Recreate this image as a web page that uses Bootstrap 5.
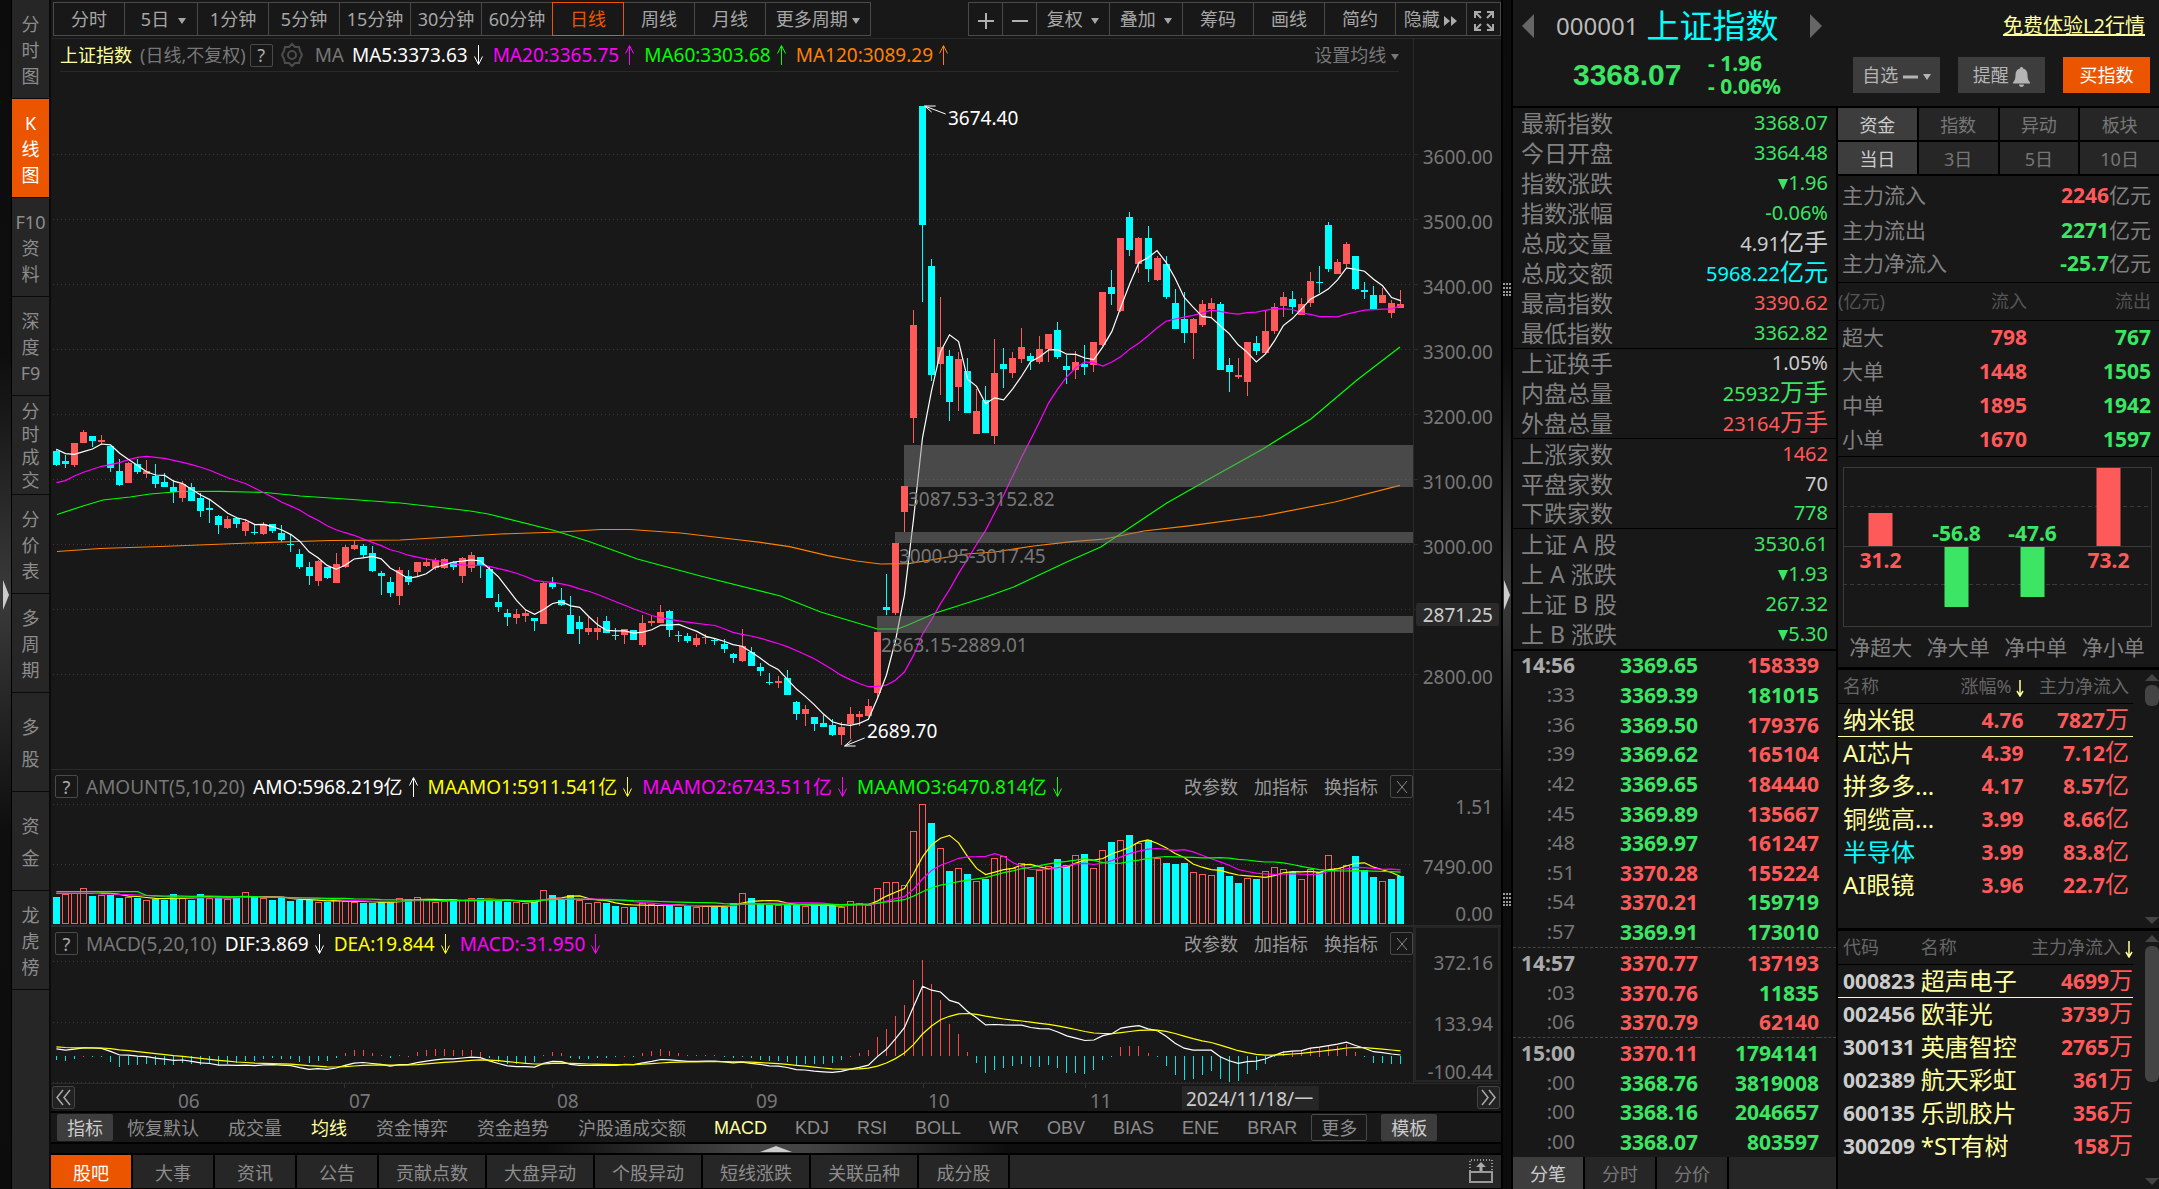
<!DOCTYPE html>
<html lang="zh-CN">
<head>
<meta charset="utf-8">
<meta name="viewport" content="width=device-width, initial-scale=1">
<title>上证指数 000001</title>
<link rel="stylesheet" href="https://cdn.jsdelivr.net/npm/bootstrap@5.3.0/dist/css/bootstrap.min.css">
<script src="https://cdn.jsdelivr.net/npm/bootstrap@5.3.0/dist/js/bootstrap.bundle.min.js"></script>
<style>
:root{--bg:#181818;--panel:#262626;--on:#3d3d3d;--dim:#777;--txt:#999;--up:#ff5a5a;--down:#3ce664;--cy:#0ff;--yel:#ffff9e;--org:#ec5500}
body{background:var(--bg);color:var(--txt);font-family:"Noto Sans","Noto Sans CJK SC",sans-serif;font-size:18px;line-height:24px;min-height:100vh;overflow:hidden}
button,input{font-family:inherit}
.btn{--bs-btn-padding-x:0;--bs-btn-padding-y:0;--bs-btn-border-radius:0;--bs-btn-font-size:18px;--bs-btn-line-height:24px;--bs-btn-color:var(--txt);--bs-btn-hover-color:#ddd;white-space:nowrap}
.up{color:var(--up)!important}.down{color:var(--down)!important}.cy{color:var(--cy)!important}.yel{color:var(--yel)!important}.pale{color:#ccc!important}.dimmed{color:var(--dim)}
.gutter{width:12px;background:linear-gradient(#0c0c0c 0,#0e0e0e 30%,#3a3a3a 50%,#0e0e0e 70%,#0c0c0c 100%);border-right:1px solid #000;flex:none}
.gutter.mid{border-left:2px solid #000;border-right:2px solid #000}
.side{width:39px;background:var(--panel);border-right:2px solid #0a0a0a;flex:none}
.side .btn{height:99px;border:0;border-bottom:1px solid #0a0a0a;color:#8c8c8c;padding-top:2px;--bs-btn-line-height:26px}
.side .btn.tight{--bs-btn-line-height:23px}
.side .btn.loose{--bs-btn-line-height:32px}
.side .btn.on{background:var(--org);color:#fff}
.tools{padding:2px 1px 2px 2px;border-bottom:1px solid #262626;height:39px}
.tools .btn{width:72px;height:34px;border:1px solid #4a4a4a;margin-right:-1px;color:#a6a6a6}
.tools .btn.w74{width:74px}.tools .btn.w106{width:106px}.tools .btn.w35{width:35px}
.tools .btn.on{border-color:var(--org);color:var(--org);z-index:1}
.caret{display:inline-block;border:4px solid transparent;border-top:6px solid currentColor;border-bottom:0;vertical-align:middle}
.plotcol{min-width:0;border-right:1px solid #2a2a2a}
.axis{width:87px;flex:none}
.legend{height:33px;flex:none}
.legend.main{border-bottom:1px solid #2a2a2a;margin:0 14px 0 9px}
.legend .val{font-size:19px;margin-right:10px;display:inline-flex;align-items:center;white-space:nowrap}
.legend .val svg{margin-left:5px;width:10px;height:22px}
.legend .nm{font-size:19px;color:var(--dim);margin-right:8px}
.qbtn{width:23px;height:23px;border:1px solid #4a4a4a!important;border-radius:2px!important;line-height:20px!important;color:#aaa!important}
.xmark{width:12px!important;height:14px!important;margin:3px auto}
.panel svg,.axis svg{display:block;width:100%;height:100%;overflow:visible}
.plot{flex:1 1 0;min-height:0}
.price-panel{flex:1;min-height:0}
.amount-panel{height:156px;border-top:1px solid #2a2a2a}
.macd-panel{height:159px;border-top:2px solid #2a2a2a;border-bottom:1px solid #2a2a2a}
.dates{height:27px}
.dates svg{display:block;width:100%;height:27px;overflow:visible}
.inds{height:33px;border-top:2px solid #000;border-bottom:2px solid #000;padding-left:6px}
.inds .g29{gap:29px}.inds .g28{gap:28px}.inds .g14{gap:14px}
.inds .btn{border:0;color:#8c8c8c}
.inds .latin .btn{font-family:"Liberation Sans",sans-serif}
.inds .btn.pill{background:var(--on);color:#ccc;width:56px;height:27px;border-radius:2px}
.inds .btn.more{border:1px solid #4a4a4a;width:56px;height:27px;border-radius:2px}
.hsplit{height:11px;background:linear-gradient(90deg,#0e0e0e 34%,#444 48%,#444 52%,#0e0e0e 66%);border-bottom:2px solid #000}
.foot{height:34px;background:var(--panel);border-bottom:1px solid #000}
.foot .btn{border:0;border-right:2px solid #000;width:82px;color:#8c8c8c;padding-top:2px}
.foot .btn.wide{width:108px}.foot .btn.w91{width:91px}
.foot .btn.on{background:var(--org);color:#fff}
.quote{width:646px;flex:none}
.quote-head{height:108px;border-bottom:2px solid #000}
.qrow1{height:52px;padding:0 14px 0 9px}
.qrow2{height:44px;padding:2px 9px 0 60px}
.code{font-size:24px;color:#bbb}
.title-big{font-size:33px;line-height:40px;color:var(--cy)}
.last{font:bold 30px/36px "Liberation Sans",sans-serif;width:135px}
.chg{font:bold 21px/23px "Noto Sans",sans-serif}
.act{width:87px;height:36px;background:var(--on)!important;border:0;color:#b4b4b4}
.act.buy{background:var(--org)!important;color:#fff}
.leftcol{width:325px;border-right:2px solid #000;flex:none}
.info td,.info th{height:30px;padding:0 8px;line-height:28px;font-weight:400}
.info th{font-size:23px;color:#808080}
.info td{font-size:20px;text-align:right}
.info i{font-style:normal;font-size:24px}
.info tbody+tbody{border-top:1px solid #000}
.ticks{border-top:2px solid #000;flex:1}
.ticks table{height:100%}
.ticks td{padding:0;text-align:right;font-size:21px;font-weight:700;line-height:24px}
.ticks td.s{font-size:20px;font-weight:400;color:#777}
.ticks td.h{color:#aaa}
.ticks tr.dash{border-bottom:1px dashed #444}
.tabs .btn{flex:1;background:var(--panel);border:0;height:32px;color:#777;padding-top:2px}
.tabs .btn.on{background:var(--on);color:#ccc}
.tabs{gap:2px;border-bottom:2px solid #000}
.lower{background:var(--panel);border-bottom:0;gap:0}
.lower .btn{width:72px;flex:none;border-right:2px solid #000}
.flow td,.flow th{padding:0 8px 0 4px;font-size:21px;line-height:24px;font-weight:400;color:#808080}
.flow td{text-align:right}
.flow .r34 tr{height:34px}
.flow .cap th{font-size:18px;color:#555;height:38px;border-top:1px solid #000;border-bottom:1px solid #000}
.netchart{border-top:1px solid #000;padding:10px 7px 0 4px;height:211px}
.netchart svg{display:block;width:100%;height:160px}
.netchart .names{font-size:21px;line-height:40px;color:#808080}
.list{border-top:3px solid #000}
.list table{width:295px}
.list th{font-size:18px;font-weight:400;color:#666;height:33px;border-bottom:1px solid #000;padding:0;white-space:nowrap}
.list td{height:33px;padding:0;font-size:21px;font-weight:700;color:var(--up);line-height:30px;white-space:nowrap}
.list td.name,.list td i{font-size:24px;font-weight:400;font-style:normal}
.list td.name{color:var(--yel)}
.list tr.sel td{border-bottom:1px solid var(--yel)}
.list td:first-child,.list th:first-child{padding-left:5px}
.list .e{text-align:right;padding-right:4px}
.sort{width:8px;height:18px;margin-left:4px}
.sbar{width:14px}
.sbar .thumb{background:#444;border-radius:6px;width:14px}
.tri{border:7px solid transparent;width:0}
.tri.u{border-top:0;border-bottom:7px solid #444}
.tri.d{border-bottom:0;border-top:7px solid #444}
</style>
</head>
<body class="d-flex vh-100">
<svg width="0" height="0" class="position-absolute" aria-hidden="true">
  <symbol id="dn" viewBox="0 0 10 22"><path d="M5.5 1v19M1.5 12.5l4 8 4-8" fill="none" stroke="currentColor"/></symbol>
  <symbol id="upa" viewBox="0 0 10 22"><path d="M5.5 21V2M1.500 9.500l4-8 4 8" fill="none" stroke="currentColor"/></symbol>
  <symbol id="srt" viewBox="0 0 8 18"><path d="M4 1v15M1 12l3 5 3-5" fill="none" stroke="currentColor" stroke-width="1.500"/></symbol>
  <symbol id="cross" viewBox="0 0 12 14"><path d="M1 1l10 12M11 1L1 13" stroke="#888"/></symbol>
  <symbol id="grip" viewBox="0 0 8 13"><path d="M0 1h8M0 5h8M0 9h8M0 12h8" stroke="#999" stroke-width="2" stroke-dasharray="2 1"/></symbol>
  <symbol id="fall" viewBox="0 0 10 11"><path d="M0 0h10L5 11z" fill="#3ce664"/></symbol>
</svg>

<div class="gutter d-flex align-items-center"><svg width="10" height="32" viewBox="0 0 10 32"><path d="M3 1l6 15-6 15z" fill="#ccc"/></svg></div>

<nav class="side d-flex flex-column">
  <button class="btn">分<br>时<br>图</button>
  <button class="btn on">K<br>线<br>图</button>
  <button class="btn">F10<br>资<br>料</button>
  <button class="btn">深<br>度<br>F9</button>
  <button class="btn tight">分<br>时<br>成<br>交</button>
  <button class="btn">分<br>价<br>表</button>
  <button class="btn">多<br>周<br>期</button>
  <button class="btn loose">多<br>股</button>
  <button class="btn loose">资<br>金</button>
  <button class="btn">龙<br>虎<br>榜</button>
</nav>

<main class="d-flex flex-column flex-grow-1" style="min-width:0">
  <div class="tools d-flex">
    <button class="btn">分时</button><button class="btn w74">&nbsp;5日 <span class="caret ms-1"></span></button><button class="btn">1分钟</button><button class="btn">5分钟</button><button class="btn">15分钟</button><button class="btn">30分钟</button><button class="btn">60分钟</button><button class="btn on">日线</button><button class="btn">周线</button><button class="btn">月线</button><button class="btn w106">更多周期 <span class="caret"></span></button>
    <div class="d-flex ms-auto">
      <button class="btn w35" aria-label="放大"><svg width="18" height="18" viewBox="0 0 18 18"><path d="M9 1v16M1 9h16" stroke="#b0b0b0" stroke-width="2"/></svg></button>
      <button class="btn w35" aria-label="缩小"><svg width="18" height="18" viewBox="0 0 18 18"><path d="M1 9h16" stroke="#b0b0b0" stroke-width="2"/></svg></button>
      <button class="btn w74">复权 <span class="caret ms-1"></span></button><button class="btn w74">叠加 <span class="caret ms-1"></span></button><button class="btn">筹码</button><button class="btn">画线</button><button class="btn">简约</button>
      <button class="btn">隐藏 <svg width="14" height="12" viewBox="0 0 14 12"><path d="M0 1l6 5-6 5zM7 1l6 5-6 5z" fill="#aaa"/></svg></button>
      <button class="btn w35" aria-label="全屏"><svg width="22" height="22" viewBox="0 0 22 22"><path d="M2 8V2h6M14 2h6v6M20 14v6h-6M8 20H2v-6M2 2l6 6M20 2l-6 6M20 20l-6-6M2 20l6-6" fill="none" stroke="#aaa" stroke-width="2"/></svg></button>
    </div>
  </div>

  <section class="panel price-panel d-flex">
    <div class="plotcol flex-grow-1 d-flex flex-column">
      <div class="legend main d-flex align-items-center">
        <span class="yel me-2">上证指数</span><span class="dimmed">(日线,不复权)</span>
        <button class="btn qbtn ms-1">?</button>
        <svg style="width:22px;height:24px" class="mx-2" viewBox="0 0 22 24"><path d="M11 1l3 3 4 0 1 4 2 4-2 4-1 4-4 0-3 3-3-3-4 0-1-4-2-4 2-4 1-4 4 0z" fill="none" stroke="#4c4c4c" stroke-width="2"/><circle cx="11" cy="12" r="4" fill="none" stroke="#4c4c4c" stroke-width="2"/></svg>
        <span class="nm ms-1">MA</span>
        <span class="val text-white">MA5:3373.63<svg><use href="#dn"/></svg></span>
        <span class="val" style="color:#f0f">MA20:3365.75<svg><use href="#upa"/></svg></span>
        <span class="val" style="color:#0f0">MA60:3303.68<svg><use href="#upa"/></svg></span>
        <span class="val" style="color:#ff8000">MA120:3089.29<svg><use href="#upa"/></svg></span>
        <button class="btn ms-auto border-0 dimmed">设置均线 <span class="caret"></span></button>
      </div>
      <div class="plot"><svg id="kline"></svg></div>
    </div>
    <div class="axis"><svg id="kaxis"></svg></div>
  </section>

  <section class="panel amount-panel d-flex">
    <div class="plotcol flex-grow-1 d-flex flex-column">
      <div class="legend d-flex align-items-center ps-1">
        <button class="btn qbtn me-2">?</button><span class="nm">AMOUNT(5,10,20)</span>
        <span class="val text-white">AMO:5968.219亿<svg><use href="#upa"/></svg></span>
        <span class="val" style="color:#ff0">MAAMO1:5911.541亿<svg><use href="#dn"/></svg></span>
        <span class="val" style="color:#f0f">MAAMO2:6743.511亿<svg><use href="#dn"/></svg></span>
        <span class="val" style="color:#0f0">MAAMO3:6470.814亿<svg><use href="#dn"/></svg></span>
        <span class="ms-auto d-flex gap-3"><button class="btn border-0">改参数</button><button class="btn border-0">加指标</button><button class="btn border-0 me-1">换指标</button></span>
        <button class="btn qbtn ms-2" aria-label="关闭"><svg class="xmark"><use href="#cross"/></svg></button>
      </div>
      <div class="plot"><svg id="amo"></svg></div>
    </div>
    <div class="axis"><svg id="aaxis"></svg></div>
  </section>

  <section class="panel macd-panel d-flex">
    <div class="plotcol flex-grow-1 d-flex flex-column">
      <div class="legend d-flex align-items-center ps-1">
        <button class="btn qbtn me-2">?</button><span class="nm">MACD(5,20,10)</span>
        <span class="val text-white">DIF:3.869<svg><use href="#dn"/></svg></span>
        <span class="val" style="color:#ff0">DEA:19.844<svg><use href="#dn"/></svg></span>
        <span class="val" style="color:#f0f">MACD:-31.950<svg><use href="#dn"/></svg></span>
        <span class="ms-auto d-flex gap-3"><button class="btn border-0">改参数</button><button class="btn border-0">加指标</button><button class="btn border-0 me-1">换指标</button></span>
        <button class="btn qbtn ms-2" aria-label="关闭"><svg class="xmark"><use href="#cross"/></svg></button>
      </div>
      <div class="plot"><svg id="macd"></svg></div>
    </div>
    <div class="axis"><svg id="maxis"></svg></div>
  </section>

  <div class="dates"><svg id="dates"></svg></div>

  <div class="inds d-flex align-items-center">
    <button class="btn pill">指标</button>
    <div class="d-flex g29" style="margin-left:14px"><button class="btn">恢复默认</button><button class="btn">成交量</button><button class="btn yel">均线</button><button class="btn">资金博弈</button><button class="btn">资金趋势</button><button class="btn">沪股通成交额</button></div>
    <div class="d-flex g28 latin" style="margin-left:28px"><button class="btn yel">MACD</button><button class="btn">KDJ</button><button class="btn">RSI</button><button class="btn">BOLL</button><button class="btn">WR</button><button class="btn">OBV</button><button class="btn">BIAS</button><button class="btn">ENE</button><button class="btn">BRAR</button></div>
    <div class="d-flex g14" style="margin-left:14px"><button class="btn more">更多</button><button class="btn pill">模板</button></div>
  </div>
  <div class="hsplit"><svg class="d-block mx-auto" width="32" height="9" viewBox="0 0 32 9"><path d="M0 8L16 2l16 6z" fill="#ccc"/></svg></div>
  <div class="foot d-flex">
    <button class="btn on">股吧</button><button class="btn">大事</button><button class="btn">资讯</button><button class="btn">公告</button><button class="btn wide">贡献点数</button><button class="btn wide">大盘异动</button><button class="btn wide">个股异动</button><button class="btn wide">短线涨跌</button><button class="btn wide">关联品种</button><button class="btn w91">成分股</button>
    <svg class="ms-auto me-2 mt-1" width="24" height="25" viewBox="0 0 24 25"><path d="M1 12V1h22v11" fill="none" stroke="#999" stroke-dasharray="1 2" stroke-width="2"/><rect x="1" y="13" width="22" height="10" fill="none" stroke="#999" stroke-width="2"/><path d="M12 3l5 5h-3.500v4h-3V8H7z" fill="#aaa"/></svg>
  </div>
</main>

<div class="gutter mid d-flex flex-column align-items-center justify-content-evenly">
  <svg width="8" height="13"><use href="#grip"/></svg>
  <svg width="8" height="32" viewBox="0 0 8 32"><path d="M1 1l6 15-6 15z" fill="#ccc"/></svg>
  <svg width="8" height="13"><use href="#grip"/></svg>
</div>

<aside class="quote d-flex flex-column">
  <header class="quote-head">
    <div class="qrow1 d-flex align-items-center">
      <button class="btn border-0 lh-1" aria-label="上一个"><svg width="12" height="24"><path d="M12 0v24L0 12z" fill="#666"/></svg></button>
      <span class="code" style="margin-left:22px">000001</span><span class="title-big ms-2">上证指数</span>
      <button class="btn border-0 lh-1 ms-4 ps-2" aria-label="下一个"><svg width="12" height="24"><path d="M0 0v24l12-12z" fill="#666"/></svg></button>
      <a href="#" class="yel ms-auto" style="font-size:20px">免费体验L2行情</a>
    </div>
    <div class="qrow2 d-flex align-items-center">
      <span class="last down">3368.07</span>
      <span class="chg down">- 1.96<br>- 0.06%</span>
      <div class="ms-auto d-flex" style="gap:18px">
        <button class="btn act">自选 <svg width="15" height="4"><path d="M0 2h15" stroke="#b4b4b4" stroke-width="3"/></svg> <span class="caret"></span></button>
        <button class="btn act">提醒 <svg width="17" height="20" viewBox="0 0 17 20"><path d="M8.500 0c1 0 1.500.7 1.500 1.600 3 .8 4.500 3 4.500 6.400 0 4 .8 5.500 2.500 7.500v1H0v-1C1.700 13.500 2.500 12 2.500 8c0-3.400 1.500-5.600 4.500-6.400C7 .7 7.500 0 8.500 0zM6 17.500h5c0 1.500-1 2.500-2.500 2.500S6 19 6 17.500z" fill="#b4b4b4"/></svg></button>
        <button class="btn act buy">买指数</button>
      </div>
    </div>
  </header>

  <div class="d-flex flex-grow-1" style="min-height:0">
    <div class="leftcol d-flex flex-column">
      <table class="info w-100">
        <tbody>
        <tr><th>最新指数</th><td class="down">3368.07</td></tr>
        <tr><th>今日开盘</th><td class="down">3364.48</td></tr>
        <tr><th>指数涨跌</th><td class="down"><svg width="10" height="13"><use href="#fall"/></svg>1.96</td></tr>
        <tr><th>指数涨幅</th><td class="down">-0.06%</td></tr>
        <tr><th>总成交量</th><td class="pale">4.91<i>亿手</i></td></tr>
        <tr><th>总成交额</th><td class="cy">5968.22<i>亿元</i></td></tr>
        <tr><th>最高指数</th><td class="up">3390.62</td></tr>
        <tr><th>最低指数</th><td class="down">3362.82</td></tr>
        </tbody><tbody>
        <tr><th>上证换手</th><td class="pale">1.05%</td></tr>
        <tr><th>内盘总量</th><td class="down">25932<i>万手</i></td></tr>
        <tr><th>外盘总量</th><td class="up">23164<i>万手</i></td></tr>
        </tbody><tbody>
        <tr><th>上涨家数</th><td class="up">1462</td></tr>
        <tr><th>平盘家数</th><td class="pale">70</td></tr>
        <tr><th>下跌家数</th><td class="down">778</td></tr>
        </tbody><tbody>
        <tr><th>上证 A 股</th><td class="down">3530.61</td></tr>
        <tr><th>上 A 涨跌</th><td class="down"><svg width="10" height="13"><use href="#fall"/></svg>1.93</td></tr>
        <tr><th>上证 B 股</th><td class="down">267.32</td></tr>
        <tr><th>上 B 涨跌</th><td class="down"><svg width="10" height="13"><use href="#fall"/></svg>5.30</td></tr>
        </tbody>
      </table>
      <div class="ticks"><table id="ticks" class="w-100"><colgroup><col style="width:62px"><col style="width:123px"><col style="width:121px"><col></colgroup><tbody></tbody></table></div>
      <div class="tabs lower d-flex"><button class="btn on">分笔</button><button class="btn">分时</button><button class="btn">分价</button></div>
    </div>

    <div class="flex-grow-1 d-flex flex-column">
      <div class="tabs d-flex bg-black"><button class="btn on">资金</button><button class="btn">指数</button><button class="btn">异动</button><button class="btn">板块</button></div>
      <div class="tabs d-flex bg-black"><button class="btn on">当日</button><button class="btn">3日</button><button class="btn">5日</button><button class="btn">10日</button></div>
      <table class="flow w-100">
        <colgroup><col style="width:92px"><col style="width:105px"><col></colgroup>
        <tbody>
        <tr style="height:38px"><th colspan="2">主力流入</th><td><b class="up">2246</b>亿元</td></tr>
        <tr style="height:31px"><th colspan="2">主力流出</th><td><b class="down">2271</b>亿元</td></tr>
        <tr style="height:37px"><th colspan="2">主力净流入</th><td><b class="down">-25.7</b>亿元</td></tr>
        </tbody>
        <tbody class="r34">
        <tr class="cap"><th class="ps-0">(亿元)</th><th class="text-end">流入</th><th class="text-end">流出</th></tr>
        <tr><th>超大</th><td class="up"><b>798</b></td><td class="down"><b>767</b></td></tr>
        <tr><th>大单</th><td class="up"><b>1448</b></td><td class="down"><b>1505</b></td></tr>
        <tr><th>中单</th><td class="up"><b>1895</b></td><td class="down"><b>1942</b></td></tr>
        <tr><th>小单</th><td class="up"><b>1670</b></td><td class="down"><b>1597</b></td></tr>
        </tbody>
      </table>
      <div class="netchart">
        <svg viewBox="0 0 309 160">
          <g fill="none" stroke="#3a3a3a" shape-rendering="crispEdges"><rect x=".5" y=".5" width="308" height="159"/><path d="M0 79.500h309"/><path d="M0 39.500h309M0 117.500h309" stroke-dasharray="4 3"/></g>
          <path d="M26 46h24v33H26zM254 1h24v78h-24z" fill="#ff5a5a"/><path d="M102 80h24v60h-24zM178 80h24v50h-24z" fill="#3ce664"/>
          <g font-size="21" font-weight="700" text-anchor="middle"><text x="38" y="101" fill="#ff5a5a">31.2</text><text x="266" y="101" fill="#ff5a5a">73.2</text><text x="114" y="74" fill="#3ce664">-56.8</text><text x="190" y="74" fill="#3ce664">-47.6</text></g>
        </svg>
        <div class="names d-flex justify-content-around"><span>净超大</span><span>净大单</span><span>净中单</span><span>净小单</span></div>
      </div>
      <div class="list d-flex justify-content-between" style="height:261px">
        <table class="align-self-start">
          <thead><tr><th>名称</th><th class="text-end">涨幅%<svg class="sort yel"><use href="#srt"/></svg></th><th class="e">主力净流入</th></tr></thead>
          <tbody>
          <tr class="sel"><td class="name">纳米银</td><td class="text-end">4.76</td><td class="e">7827<i>万</i></td></tr>
          <tr><td class="name">AI芯片</td><td class="text-end">4.39</td><td class="e">7.12<i>亿</i></td></tr>
          <tr><td class="name">拼多多...</td><td class="text-end">4.17</td><td class="e">8.57<i>亿</i></td></tr>
          <tr><td class="name">铜缆高...</td><td class="text-end">3.99</td><td class="e">8.66<i>亿</i></td></tr>
          <tr><td class="name cy">半导体</td><td class="text-end">3.99</td><td class="e">83.8<i>亿</i></td></tr>
          <tr><td class="name">AI眼镜</td><td class="text-end">3.96</td><td class="e">22.7<i>亿</i></td></tr>
          </tbody>
        </table>
        <div class="sbar d-flex flex-column pt-1 pb-1"><div class="tri u"></div><div class="thumb mt-1" style="height:21px"></div><div class="tri d mt-auto"></div></div>
      </div>
      <div class="list d-flex justify-content-between flex-grow-1">
        <table class="align-self-start">
          <thead><tr><th>代码</th><th>名称</th><th class="text-end">主力净流入<svg class="sort yel"><use href="#srt"/></svg></th></tr></thead>
          <tbody>
          <tr class="sel"><td class="pale">000823</td><td class="name">超声电子</td><td class="text-end">4699<i>万</i></td></tr>
          <tr><td class="pale">002456</td><td class="name">欧菲光</td><td class="text-end">3739<i>万</i></td></tr>
          <tr><td class="pale">300131</td><td class="name">英唐智控</td><td class="text-end">2765<i>万</i></td></tr>
          <tr><td class="pale">002389</td><td class="name">航天彩虹</td><td class="text-end">361<i>万</i></td></tr>
          <tr><td class="pale">600135</td><td class="name">乐凯胶片</td><td class="text-end">356<i>万</i></td></tr>
          <tr><td class="pale">300209</td><td class="name">*ST有树</td><td class="text-end">158<i>万</i></td></tr>
          </tbody>
        </table>
        <div class="sbar d-flex flex-column pt-1 pb-1"><div class="tri u"></div><div class="thumb mt-1" style="height:136px"></div><div class="tri d mt-auto"></div></div>
      </div>
    </div>
  </div>
</aside>

<script>
/* tick list: time, price, price direction, volume, volume direction */
const rows = `14:56 3369.65 d 158339 u|:33 3369.39 d 181015 d|:36 3369.50 d 179376 u|:39 3369.62 d 165104 u|:42 3369.65 d 184440 u|:45 3369.89 d 135667 u|:48 3369.97 d 161247 u|:51 3370.28 u 155224 u|:54 3370.21 u 159719 d|:57 3369.91 d 173010 d|14:57 3370.77 u 137193 u|:03 3370.76 u 11835 d|:06 3370.79 u 62140 u|15:00 3370.11 u 1794141 d|:00 3368.76 d 3819008 d|:00 3368.16 d 2046657 d|:00 3368.07 d 803597 d`.split('|').map(r => r.split(' '));
const cls = d => d === 'u' ? 'up' : 'down';
document.querySelector('#ticks tbody').innerHTML = rows.map((r, i) =>
  `<tr class="${rows[i + 1] && rows[i + 1][0].length > 3 ? 'dash' : ''}"><td class="${r[0].length > 3 ? 'h' : 's'}">${r[0]}</td><td class="${cls(r[2])}">${r[1]}</td><td class="${cls(r[4])}">${r[3]}</td><td></td></tr>`).join('');

/* daily candles: high, body top, body bottom, low, colour; levels count down from the top, 1.947 steps per point */
const parts = [
[1260, `88,93,135,140,c;105,123,132,143,c;69,69,135,140,r;30,36,69,69,r;48,48,63,80,c;45,60,66,72,r;78,78,144,155,c;117,153,195,198,c;126,129,189,189,r;117,132,156,161,c;120,153,162,173,r;132,167,192,204,c;159,186,201,201,c;180,201,216,248,c;183,192,234,245,r;189,201,243,243,c;219,234,273,291,c;240,264,270,309,c;285,288,315,342,c;288,297,324,326,r;291,293,312,323,c;297,306,333,347,r;315,336,339,345,c;306,312,342,345,r;312,312,333,338,c;315,339,360,366,c;342,372,375,396,c;387,402,441,447,c;426,441,468,495,c;420,423,483,498,r;441,441,474,477,c;399,432,489,489,r;375,381,441,444,r;362,375,387,390,r;372,378,405,411,c;378,399,453,456,c;453,459,468,525,c;471,486,519,531,c;441,450,528,555,r;450,468,486,495,c;426,426,456,471,r;414,426,438,441,r;414,420,444,450,r;414,417,444,447,r;423,426,441,450,c;411,414,468,489,r;396,405,444,456,r;411,411,438,474,c`],
[1590, `112,118,204,204,c;192,216,231,246,c;237,249,261,288,c;237,252,264,282,r;237,249,258,276,r;264,264,273,303,c;156,158,282,282,r;141,158,171,177,c;174,210,224,228,c;198,255,312,312,c;258,276,297,342,c;261,294,306,315,r;261,294,306,330,r;258,273,309,309,c;294,315,318,330,c;297,297,315,342,r;300,300,330,330,c;255,279,345,351,r;258,273,279,288,r;225,246,279,279,r;240,243,300,321,c;303,315,318,336,c;309,318,333,339,c;312,324,345,351,r;312,321,324,342,r;324,330,333,345,c;327,342,357,369,c;369,372,384,399,c;297,348,393,396,r;351,366,408,408,c;399,411,423,438,c;429,456,459,465,c;438,453,459,474,r;420,444,495,495,c;513,516,552,570,c;525,537,552,588,r;561,561,582,603,c;555,579,591,591,c;567,585,615,618,c;576,591,615,645,r;531,552,582,627,r;543,552,561,588,r;507,528,558,561,r;306,306,489,504,r;132,231,240,255,c;39,39,249,255,r`],
[0, `1458,1458,1536,1596,r;930,975,1254,1329,r;318,318,675,906,c;777,798,1125,1143,c;891,1041,1092,1185,r;1050,1068,1206,1263,c;1056,1077,1161,1233,r;1074,1113,1239,1239,c;1167,1233,1302,1302,r;1158,1200,1299,1299,c;1017,1119,1308,1332,r;1044,1092,1107,1164,c;1056,1074,1119,1134,r;984,1041,1077,1089,r;1059,1068,1083,1110,c;1008,1047,1086,1092,r;1002,1002,1047,1086,r;966,990,1071,1077,c;1065,1098,1110,1152,c;1053,1086,1110,1137,r;1035,1092,1101,1125,c;1026,1026,1095,1116,r;876,876,1035,1038,r;810,861,882,915,c;714,714,933,936,r;636,651,750,768,c;711,714,792,819,r;678,714,807,846,c;768,774,840,843,r;768,792,891,897,c;867,909,987,987,c;876,957,999,1029,c;954,957,999,1077,r;900,912,975,981,r;894,909,927,954,r;906,912,1110,1110,c;1074,1095,1116,1176,c;1074,1125,1131,1137,r;1026,1026,1146,1188,r;1008,1029,1053,1065,c;933,993,1059,1062,r;909,921,993,1002,r;876,891,918,951,r;873,897,921,942,c;894,912,945,945,r;816,843,909,921,r;798,846,849,879,c;666,675,807,816,c;777,786,822,822,r;726,732,792,801,r;768,768,867,870,c;846,870,876,897,c;858,885,927,930,c;864,885,909,909,r;900,909,939,954,r;870,912,924,924,r`]];
const price = v => 3600 - (v - 463) / 1.947;
const candles = parts.flatMap(([o, s]) => s.split(';').map(c => { const a = c.split(','); return { h: price(+a[0] + o), t: price(+a[1] + o), b: price(+a[2] + o), l: price(+a[3] + o), up: a[4] === 'r' }; }));
const closes = candles.map(c => c.up ? c.t : c.b);

/* turnover bars: depth below the top line, r = rising day, c = falling day */
const amt = `378c 370r 365r 352r 375c 373r 372c 380c 377r 381c 388r 384c 387c 369c 380r 387c 369c 380r 382c 385r 380c 364r 375c 380r 387c 382c 390c 386c 387c 394r 393c 387r 390r 392r 396c 396c 393c 393c 382r 384c 379r 388r 394r 390r 384c 388r 382r 381c 388c 390c 393c 394r 397r 393c 358r 372c 384c 372c 388r 397r 394r 396c 405c 408r 408c 397r 400r 402r 403c 408c 405c 407r 405r 406c 407c 396c 367r 381c 397c 402c 402r 399c 402c 406r 403c 405c 405c 409r 391r 397r 403r 352r 334r 334r 343r 181r 100r 156c 232r 300c 292r 309c 331r 324c 262r 256r 291r 277r 318c 298r 286r 264c 283c 253r 249c 292r 238r 213c 208r 192c 216r 208c 262r 276c 279c 276c 304r 310r 313r 288c 315c 336c 322r 324c 301r 289r 295r 304c 325r 295r 304c 253r 292r 283r 255c 297c 318c 331r 324c 315c`.split(' ').map(s => ({ v: (459 - parseInt(s)) * 15100 / 359, up: s.endsWith('r') }));

const mean = (a, i, n) => { const s = a.slice(Math.max(0, i - n + 1), i + 1); return s.reduce((x, y) => x + y, 0) / s.length; };
const ma = (a, n, head = []) => a.map((_, i) => i < head.length ? head[i] : mean(a, i, n));
const lvl = s => s.split(' ').map(v => price(+v + 1260));
const ma5 = ma(closes, 5, lvl('88 101 103 95'));
const ma20 = ma(closes, 20, lvl('188 182 168 157 148 139 134 128 119 112 109 112 115 121 127 134 142 151 162'));

/* slow averages, sampled as x,y on the 1449 x 1189 sheet */
const ma60 = [[57,514.5],[83,506],[103,500],[130,497],[150,494],[180,491.5],[220,491.3],[265,492.5],[300,496],[345,499],[400,503],[440,507.5],[470,511],[488,514],[554,530.5],[590,542],[637,559],[700,576],[780,596],[820,612],[877,629],[897,629],[905,626],[935,613],[985,597],[1013,587],[1066,562],[1100,547],[1166,503],[1210,478],[1262,449],[1310,419],[1356,380],[1399,347]];
const ma120 = [[57,551.5],[100,548.5],[160,546.5],[250,543],[330,540.5],[400,540],[450,537],[500,534],[560,532],[600,529.5],[630,529.5],[680,533],[740,540],[760,542.3],[789,546.7],[827,555.7],[856,561],[880,564],[908,563.7],[966,554],[994,552],[1033,546],[1071,541.7],[1104,539],[1143,531],[1190,525.7],[1262,516],[1334,502],[1399,485.3]];

const $ = id => document.getElementById(id);
const line = (pts, col) => `<path d="M${pts.map(p => p[0].toFixed(1) + ' ' + p[1].toFixed(1)).join('L')}" fill="none" stroke="${col}" stroke-width="1.2"/>`;
const grid = (y, W) => `<path d="M2 ${Math.round(y) + .5}H${W}" stroke="#383838" stroke-dasharray="1 3" shape-rendering="crispEdges"/>`;
const rect = (x, y, w, h, f) => `<rect x="${Math.round(x)}" y="${Math.round(y)}" width="${w}" height="${Math.max(1, Math.round(h))}" fill="${f}"/>`;
const label = (x, y, s, col = '#777', a = 'start') => `<text x="${Math.round(x)}" y="${Math.round(y)}" fill="${col}" font-size="19" text-anchor="${a}">${s}</text>`;

function draw() {
  const W = $('kline').clientWidth, H = $('kline').clientHeight, fx = W / 1361, fy = H / 697;
  const X = i => (5.4 + 9.015 * i) * fx, sx = x => (x - 51) * fx, sy = y => (y - 72) * fy;
  const Y = p => sy(154.3 + (3600 - p) * .649);
  const red = '#ff5a5a', cyan = '#0ff';
  let s = '', ax = '';
  for (let p = 3600; p >= 2800; p -= 100) {
    s += grid(Y(p), W);
    if (p !== 2900) ax += label(79, Y(p) + 43, p.toFixed(2), '#777', 'end');
    ax += `<path d="M0 ${Math.round(Y(p) + 33) + .5}h4" stroke="#2a2a2a"/>`;
  }
  s += '<g shape-rendering="crispEdges">' + candles.map((c, i) => {
    const f = c.up ? red : cyan, x = X(i);
    return rect(x - .5, Y(c.h), 1, Y(c.l) - Y(c.h), f) + rect(x - 3.5, Y(c.t), 7, Y(c.b) - Y(c.t), f);
  }).join('') + '</g>';
  s += line(ma120.map(p => [sx(p[0]), sy(p[1])]), '#ff8000') + line(ma60.map(p => [sx(p[0]), sy(p[1])]), '#0f0');
  s += line(ma20.map((v, i) => [X(i), Y(v)]), '#f0f') + line(ma5.map((v, i) => [X(i), Y(v)]), '#fff');
  [[94, 3152.82, 3087.53, 506], [93, 3017.45, 3000.95, 563], [91, 2889.01, 2863.15, 652]].forEach(([i, t, b, ty]) => {
    s += `<rect x="${Math.round(X(i))}" y="${Math.round(Y(t))}" width="${W - Math.round(X(i))}" height="${Math.round(Y(b) - Y(t))}" fill="#808080" fill-opacity=".48"/>` + label(X(i) + 4, sy(ty), b.toFixed(2) + '-' + t.toFixed(2));
  });
  s += label(sx(947), sy(125), '3674.40', '#fff') + `<path d="M${sx(945)} ${sy(114)}L${sx(924)} ${sy(106)}m11 0h-11l7 6" fill="none" stroke="#fff"/>`;
  s += label(sx(866), sy(738), '2689.70', '#fff') + `<path d="M${sx(864)} ${sy(738)}L${sx(844)} ${sy(746)}m11 0h-11l7-6" fill="none" stroke="#fff"/>`;
  $('kline').innerHTML = s;
  const cy = sy(615) + 33;
  ax += `<rect x="2" y="${Math.round(cy - 12)}" width="83" height="23" rx="2" fill="#2a2a2a"/>` + label(79, cy + 7, '2871.25', '#ccc', 'end');
  $('kaxis').innerHTML = ax;

  /* turnover */
  const h2 = $('amo').clientHeight - 1, A = v => h2 - v / 15100 * (h2 - 1);
  s = grid(A(15100), W) + grid(A(7550), W) + '<g shape-rendering="crispEdges">' + amt.map((a, i) => {
    const x = Math.round(X(i) - 3.5), y = Math.round(A(a.v));
    return a.up ? `<rect x="${x + .5}" y="${y + .5}" width="6" height="${h2 - y - 1}" fill="none" stroke="${red}"/>` : rect(x, y, 7, h2 - y, cyan);
  }).join('') + '</g>';
  const av = amt.map(a => a.v);
  [[5, '#ff0', 3840, 5], [10, '#f0f', 3880, 5], [20, '#0f0', 4080, 10]].forEach(([n, col, h, k]) => {
    s += line(ma(av, n, Array(k).fill(h)).map((v, i) => [X(i), A(v)]), col);
  });
  $('amo').innerHTML = s;
  $('aaxis').innerHTML = label(79, 44, '1.51', '#777', 'end') + label(79, 104, '7490.00', '#777', 'end') + label(79, 151, '0.00', '#777', 'end');

  /* MACD(5,20,10) from the closes */
  let e5 = 3140, e20 = 3104, dea = 37; const M = v => .5 + (372.16 - v) * .2567;
  const dif = [], de = []; let bars = '';
  closes.forEach((c, i) => {
    e5 += (c - e5) * 2 / 6; e20 += (c - e20) * 2 / 21; const d = e5 - e20; dea += (d - dea) * 2 / 11;
    dif.push([X(i), M(d)]); de.push([X(i), M(dea)]);
    const m = 2 * (d - dea), y0 = M(0), y1 = M(m);
    bars += rect(X(i) - .5, Math.min(y0, y1), 1, Math.abs(y1 - y0), m > 0 ? '#ff4646' : '#00e5e5');
  });
  $('macd').innerHTML = grid(M(372.16), W) + grid(M(133.94), W) + grid(M(-100.44), W) + `<g shape-rendering="crispEdges">${bars}</g>` + line(dif, '#fff') + line(de, '#ff0');
  $('maxis').innerHTML = `<rect x="1" y="0" width="84" height="154" fill="none" stroke="#262626" stroke-width="2"/>` + label(79, 43, '372.16', '#777', 'end') + label(79, 104, '133.94', '#777', 'end') + label(79, 152, '-100.44', '#777', 'end');

  /* date axis */
  s = '';
  [[173, '06'], [344, '07'], [552, '08'], [750, '09'], [922, '10'], [1084, '11'], [1274, '']].forEach(([x, t]) => {
    s += `<path d="M${Math.round(sx(x)) + .5} 0v4" stroke="#333"/>` + (t && label(sx(x) + 5, 24, t));
  });
  s += `<rect x="${sx(1181)}" y="2" width="137" height="24" fill="#262626"/>` + label(sx(1185), 22, '2024/11/18/一', '#ccc');
  const box = (x, d) => `<rect x="${x + .5}" y="2.500" width="22" height="22" rx="2" fill="#222" stroke="#444"/><path d="${d}" transform="translate(${x} 2)" fill="none" stroke="#aaa" stroke-width="1.500"/>`;
  s += box(1, 'M11 4L5 11.500L11 19M18 4L12 11.500L18 19') + box($('dates').clientWidth - 24, 'M5 4L11 11.500L5 19M12 4L18 11.500L12 19');
  $('dates').innerHTML = s;
}
draw();
addEventListener('resize', draw);
</script>
</body>
</html>
